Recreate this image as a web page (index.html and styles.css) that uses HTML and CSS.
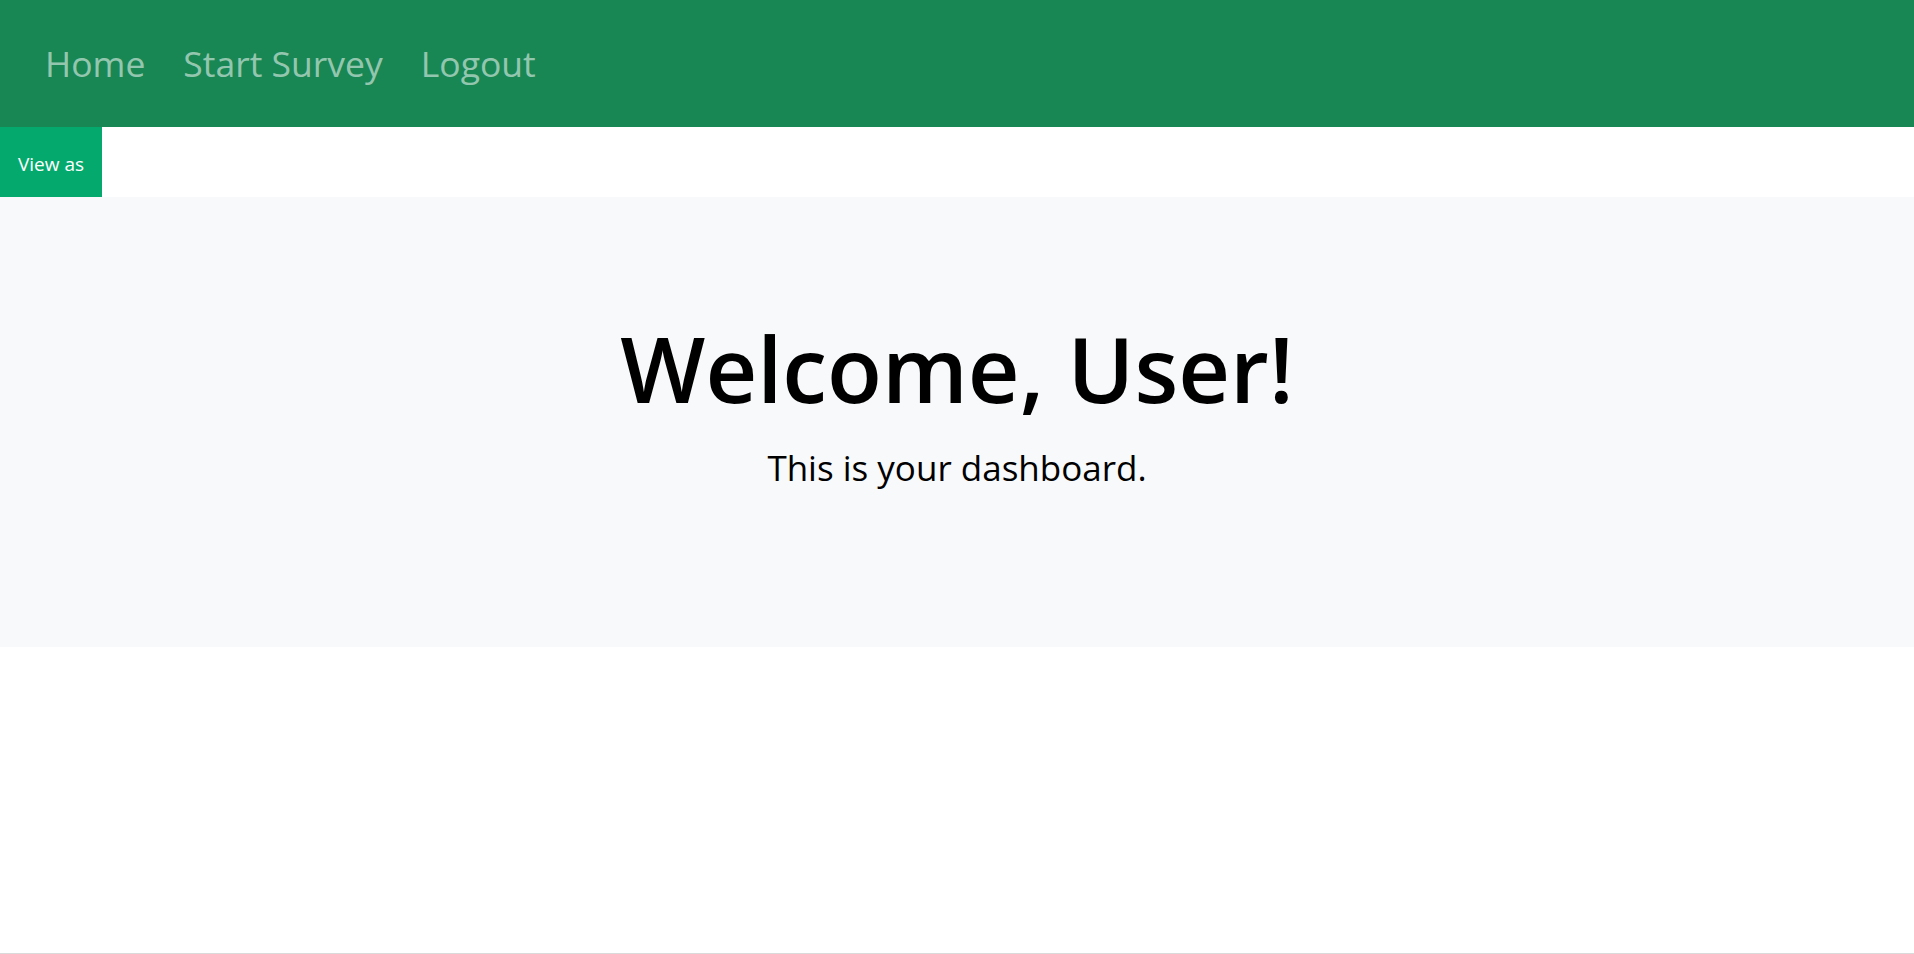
FILE: index.html
```html
<!DOCTYPE html>
<html lang="en">
<head>
<meta charset="utf-8">
<title>Dashboard</title>
<link rel="stylesheet" href="styles.css">
</head>
<body>
<div class="page">
  <nav class="navbar">
    <a class="nav-link" href="#">Home</a>
    <a class="nav-link" href="#">Start Survey</a>
    <a class="nav-link" href="#">Logout</a>
  </nav>
  <div class="toolbar">
    <button class="view-as">View as</button>
  </div>
  <section class="jumbotron">
    <h1 class="title">Welcome, User!</h1>
    <p class="lead">This is your dashboard.</p>
  </section>
  <div class="filler"></div>
</div>
</body>
</html>
```

FILE: styles.css
```css
html, body {
  margin: 0;
  padding: 0;
}
body {
  font-family: "Open Sans", "Noto Sans", sans-serif;
  color: #000;
  background: #fff;
}
.page {
  min-height: 100vh;
  box-sizing: border-box;
  display: flex;
  flex-direction: column;
  border-bottom: 1px solid #dadada;
}
.navbar {
  height: 127px;
  box-sizing: border-box;
  padding-top: 1px;
  background: #198754;
  display: flex;
  align-items: center;
  padding-left: 45px;
  gap: 38px;
}
.nav-link {
  color: rgba(255, 255, 255, 0.55);
  text-decoration: none;
  font-size: 35.5px;
  line-height: 1.5;
}
.toolbar {
  height: 70px;
  display: flex;
}
.view-as {
  width: 102px;
  height: 70px;
  box-sizing: border-box;
  border: none;
  margin: 0;
  padding: 4px 0 0;
  background: #04aa6d;
  color: #fff;
  font-family: "Open Sans", "Noto Sans", sans-serif;
  font-size: 19px;
}
.jumbotron {
  background: #f8f9fa;
  height: 450px;
  box-sizing: border-box;
  padding-top: 117px;
  text-align: center;
}
.title {
  margin: 0 0 20px;
  font-size: 90px;
  line-height: 1.2;
  font-weight: 600;
}
.lead {
  margin: 0;
  font-size: 35px;
  line-height: 1.5;
  font-weight: 400;
}
.filler {
  flex: 1;
}
```
